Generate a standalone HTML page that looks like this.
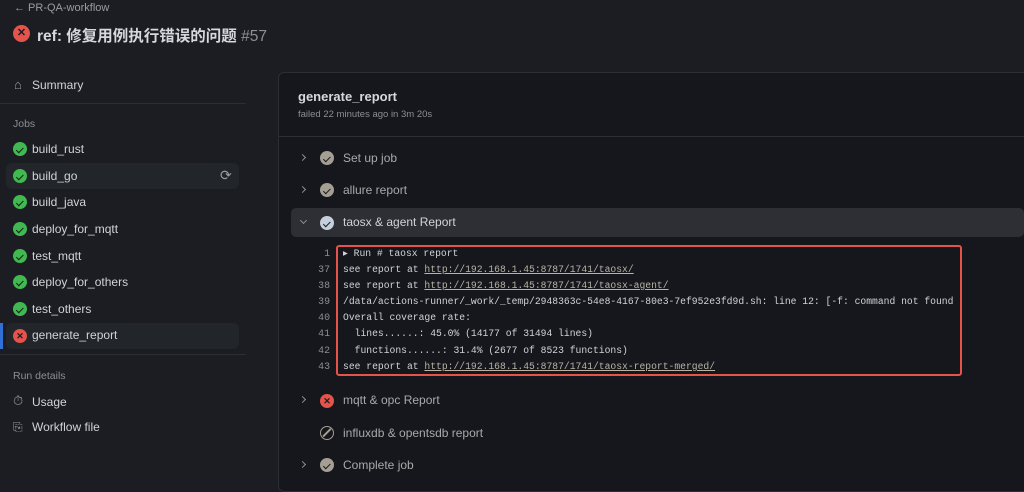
<!DOCTYPE html>
<html><head><meta charset="utf-8"><style>
*{margin:0;padding:0;box-sizing:border-box}
body{width:1024px;height:476px;background:#1b1d22;font-family:"Liberation Sans","Noto Sans CJK SC",sans-serif;color:#d0d3d8;position:relative;overflow:hidden}
.a{position:absolute;white-space:nowrap}
.ok{width:14px;height:14px;border-radius:50%;background:#3fb950;position:absolute}
.ok::after,.gk::after{content:"";position:absolute;left:5px;top:3.5px;width:3px;height:5.5px;border:solid #1b1d22;border-width:0 1.5px 1.5px 0;transform:rotate(45deg)}
.er{width:14px;height:14px;border-radius:50%;background:#e5534b;position:absolute;color:#1b1d22;font-size:9px;line-height:14px;text-align:center;font-weight:bold}
.gk{width:14px;height:14px;border-radius:50%;background:#a59e92;position:absolute}
.job{font-size:12px;color:#d0d3d8}
.step{font-size:12px;color:#a8a9ab}
.chev{position:absolute;width:5px;height:5px;border:solid #8b8e93;border-width:1.5px 1.5px 0 0;transform:rotate(45deg)}
.mono{font-family:"Liberation Mono",monospace;font-size:9.7px;color:#d0d3d8;white-space:pre}
.ln{position:absolute;width:30px;text-align:right;left:300px;color:#8b8e93;font-family:"Liberation Mono",monospace;font-size:9.9px}
.u{color:#b9b3a6;text-decoration:underline}
</style></head><body>
<div class="a" style="left:14px;top:2px;font-size:11px;color:#9a9ca1">← PR-QA-workflow</div>
<div class="er" style="left:13px;top:25px;width:17px;height:17px;line-height:17px;font-size:11px">✕</div>
<div class="a" style="left:37px;top:24px;font-size:15.5px;font-weight:bold;color:#d5d9de">ref: 修复用例执行错误的问题 <span style="color:#8b8e93;font-weight:normal">#57</span></div>

<div class="a" style="left:14px;top:77px;font-size:13px;color:#9a9ca1">⌂</div>
<div class="a job" style="left:32px;top:78px">Summary</div>
<div class="a" style="left:0;top:103px;width:246px;height:1px;background:#2b2e33"></div>
<div class="a" style="left:13px;top:118px;font-size:10.5px;color:#8b8e93">Jobs</div>

<div class="a" style="left:6px;top:163px;width:233px;height:26px;background:#22252a;border-radius:6px"></div>
<div class="ok" style="left:13px;top:142px"></div><div class="a job" style="left:32px;top:142px">build_rust</div>
<div class="ok" style="left:13px;top:169px"></div><div class="a job" style="left:32px;top:169px">build_go</div>
<div class="a" style="left:220px;top:167px;font-size:14px;color:#9a9ca1">⟳</div>
<div class="ok" style="left:13px;top:195px"></div><div class="a job" style="left:32px;top:195px">build_java</div>
<div class="ok" style="left:13px;top:222px"></div><div class="a job" style="left:32px;top:222px">deploy_for_mqtt</div>
<div class="ok" style="left:13px;top:249px"></div><div class="a job" style="left:32px;top:249px">test_mqtt</div>
<div class="ok" style="left:13px;top:275px"></div><div class="a job" style="left:32px;top:275px">deploy_for_others</div>
<div class="ok" style="left:13px;top:302px"></div><div class="a job" style="left:32px;top:302px">test_others</div>
<div class="a" style="left:6px;top:323px;width:233px;height:26px;background:#22252a;border-radius:6px"></div>
<div class="a" style="left:0;top:323px;width:3px;height:26px;background:#2f6fd6"></div>
<div class="er" style="left:13px;top:329px">✕</div><div class="a job" style="left:32px;top:328px">generate_report</div>
<div class="a" style="left:0;top:354px;width:246px;height:1px;background:#2b2e33"></div>
<div class="a" style="left:13px;top:370px;font-size:10.5px;color:#8b8e93">Run details</div>
<div class="a" style="left:13px;top:393px;font-size:13px;color:#9a9ca1">⏱</div><div class="a job" style="left:32px;top:395px">Usage</div>
<div class="a" style="left:13px;top:420px;font-size:12px;color:#9a9ca1">⎘</div><div class="a job" style="left:32px;top:420px">Workflow file</div>

<div class="a" style="left:278px;top:72px;width:760px;height:420px;background:#15171c;border:1px solid #2b2e33;border-radius:6px"></div>
<div class="a" style="left:278px;top:136px;width:746px;height:1px;background:#2b2e33"></div>
<div class="a" style="left:298px;top:89px;font-size:13px;font-weight:bold;color:#d5d9de">generate_report</div>
<div class="a" style="left:298px;top:109px;font-size:9.5px;color:#8b8e93">failed 22 minutes ago in 3m 20s</div>

<div class="chev" style="left:300px;top:155px"></div><div class="gk" style="left:320px;top:151px"></div><div class="a step" style="left:343px;top:151px">Set up job</div>
<div class="chev" style="left:300px;top:187px"></div><div class="gk" style="left:320px;top:183px"></div><div class="a step" style="left:343px;top:183px">allure report</div>
<div class="a" style="left:291px;top:208px;width:733px;height:29px;background:#2d2f34;border-radius:5px"></div>
<div class="chev" style="left:301px;top:218px;transform:rotate(135deg)"></div><div class="gk" style="left:320px;top:216px;background:#c5d0dc"></div><div class="a step" style="left:343px;top:215px;color:#d0d3d8">taosx &amp; agent Report</div>

<div class="a" style="left:336px;top:245px;width:626px;height:131px;border:2px solid #e5534b;border-radius:3px"></div>
<div class="ln" style="top:248px">1</div><div class="a mono" style="left:343px;top:248px">▸ Run # taosx report</div>
<div class="ln" style="top:264px">37</div><div class="a mono" style="left:343px;top:264px">see report at <span class="u">http://192.168.1.45:8787/1741/taosx/</span></div>
<div class="ln" style="top:280px">38</div><div class="a mono" style="left:343px;top:280px">see report at <span class="u">http://192.168.1.45:8787/1741/taosx-agent/</span></div>
<div class="ln" style="top:296px">39</div><div class="a mono" style="left:343px;top:296px">/data/actions-runner/_work/_temp/2948363c-54e8-4167-80e3-7ef952e3fd9d.sh: line 12: [-f: command not found</div>
<div class="ln" style="top:312px">40</div><div class="a mono" style="left:343px;top:312px">Overall coverage rate:</div>
<div class="ln" style="top:328px">41</div><div class="a mono" style="left:343px;top:328px">  lines......: 45.0% (14177 of 31494 lines)</div>
<div class="ln" style="top:345px">42</div><div class="a mono" style="left:343px;top:345px">  functions......: 31.4% (2677 of 8523 functions)</div>
<div class="ln" style="top:361px">43</div><div class="a mono" style="left:343px;top:361px">see report at <span class="u">http://192.168.1.45:8787/1741/taosx-report-merged/</span></div>

<div class="chev" style="left:300px;top:397px"></div><div class="er" style="left:320px;top:394px">✕</div><div class="a step" style="left:343px;top:393px">mqtt &amp; opc Report</div>
<div class="a" style="left:320px;top:426px;width:14px;height:14px;border:1.5px solid #a59e92;border-radius:50%"></div><div class="a" style="left:326px;top:427px;width:1.5px;height:11px;background:#a59e92;transform:rotate(45deg)"></div><div class="a step" style="left:343px;top:426px">influxdb &amp; opentsdb report</div>
<div class="chev" style="left:300px;top:462px"></div><div class="gk" style="left:320px;top:458px"></div><div class="a step" style="left:343px;top:458px">Complete job</div>
</body></html>
